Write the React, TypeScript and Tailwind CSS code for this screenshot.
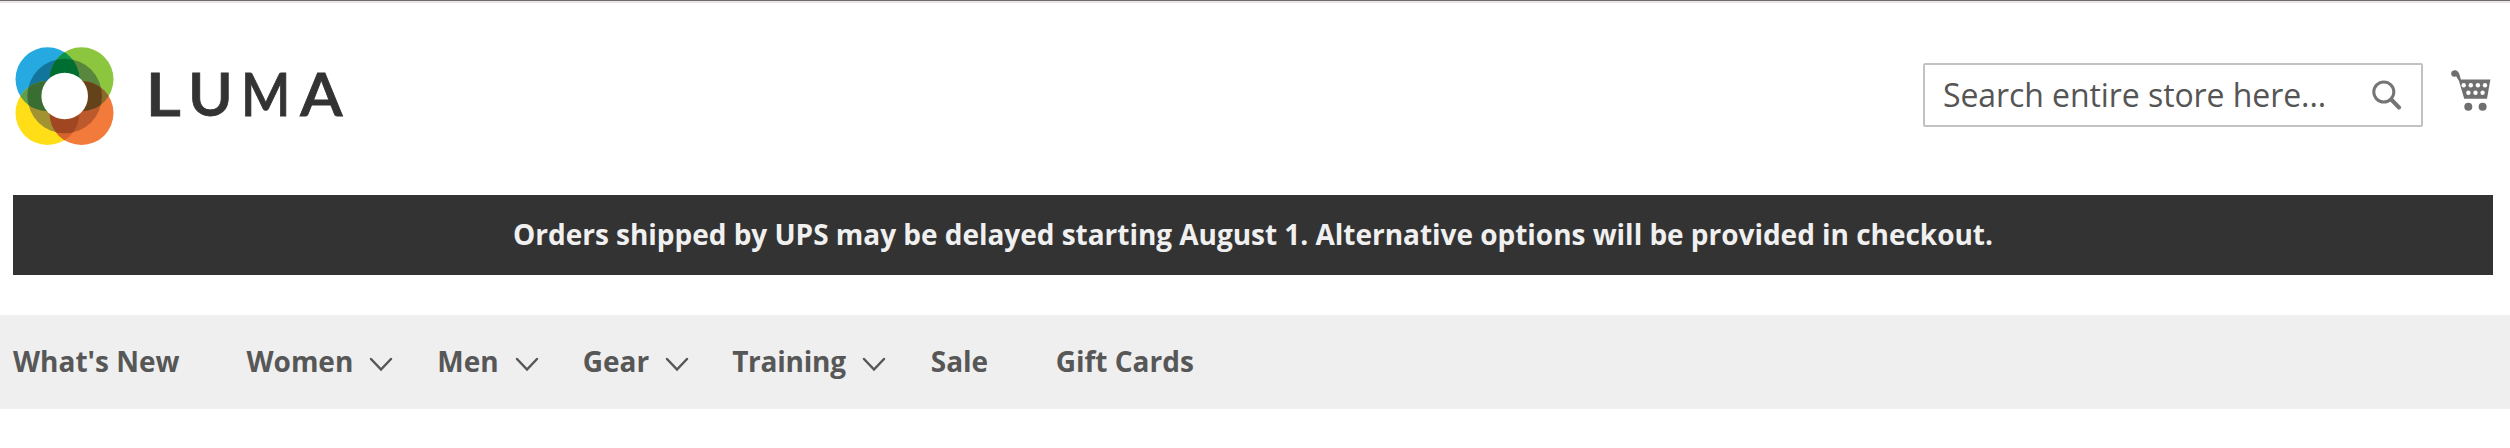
import { clsx } from "clsx";

const links = [
  { label: "What's New", hasMenu: false, space: "mr-[67px]" },
  { label: "Women", hasMenu: true, space: "mr-[44px]" },
  { label: "Men", hasMenu: true, space: "mr-[44px]" },
  { label: "Gear", hasMenu: true, space: "mr-[43px]" },
  { label: "Training", hasMenu: true, space: "mr-[45px] tracking-[-0.25px]" },
  { label: "Sale", hasMenu: false, space: "mr-[67.5px]" },
  { label: "Gift Cards", hasMenu: false, space: "" },
];

const letters = [
  { char: "L", transform: "translate(145.5 116.3) scale(1.157 1)" },
  { char: "U", transform: "translate(187.9 116.3) scale(1.03 1)" },
  { char: "M", transform: "translate(240.9 116.3) scale(0.893 1)" },
  { char: "A", transform: "translate(300 116.3) scale(1.05 1)" },
];

const Logo = () => (
  <svg width="360" height="120" viewBox="0 36 360 120" className="block" aria-label="LUMA">
    <defs>
      <clipPath id="blue"><circle cx="47.5" cy="79.3" r="32" /></clipPath>
      <clipPath id="orange"><circle cx="81.5" cy="113" r="32" /></clipPath>
      <clipPath id="ring"><circle cx="64.7" cy="96" r="37.3" /></clipPath>
    </defs>
    <circle cx="47.5" cy="79.3" r="32" fill="#26a9e0" />
    <circle cx="81.5" cy="79.3" r="32" fill="#8cc63f" />
    <circle cx="47.5" cy="113" r="32" fill="#ffde17" />
    <circle cx="81.5" cy="113" r="32" fill="#f27b3c" />
    <g clipPath="url(#blue)">
      <circle cx="81.5" cy="79.3" r="32" fill="#0b9347" />
      <circle cx="47.5" cy="113" r="32" fill="#5f9e4c" />
    </g>
    <g clipPath="url(#orange)">
      <circle cx="81.5" cy="79.3" r="32" fill="#8a6a2b" />
      <circle cx="47.5" cy="113" r="32" fill="#d8622b" />
    </g>
    <g clipPath="url(#ring)">
      <circle cx="47.5" cy="79.3" r="32" fill="#12769c" />
      <circle cx="81.5" cy="79.3" r="32" fill="#58873d" />
      <circle cx="47.5" cy="113" r="32" fill="#a39232" />
      <circle cx="81.5" cy="113" r="32" fill="#bd5a2d" />
      <g clipPath="url(#blue)">
        <circle cx="81.5" cy="79.3" r="32" fill="#006d31" />
        <circle cx="47.5" cy="113" r="32" fill="#3a6d31" />
      </g>
      <g clipPath="url(#orange)">
        <circle cx="81.5" cy="79.3" r="32" fill="#65431a" />
        <circle cx="47.5" cy="113" r="32" fill="#a04722" />
      </g>
    </g>
    <circle cx="64.7" cy="96" r="23.3" fill="#fff" />
    <g className="font-['Lato',sans-serif] text-[59px] font-semibold" fill="#333" stroke="#333" strokeWidth="0.8">
      {letters.map((letter) => (
        <text key={letter.char} transform={letter.transform}>{letter.char}</text>
      ))}
    </g>
  </svg>
);

const SearchIcon = () => (
  <svg width="30" height="30" viewBox="0 0 30 30" fill="none" stroke="#757575" className="-ml-4">
    <circle cx="11.8" cy="12" r="10" strokeWidth="3" />
    <path d="M19.2 19.5 27 27.5" strokeWidth="4" strokeLinecap="round" />
  </svg>
);

const CartIcon = () => (
  <svg width="40" height="42" viewBox="0 0 40 42" fill="#6f6f6f">
    <circle cx="3.4" cy="3.6" r="3.2" />
    <path d="M3 .4C7 0 8.5 3 9.8 9.6H39.4L36 28.8H13.2L8 11 5 6Z" />
    <circle cx="17.3" cy="36.8" r="4" />
    <circle cx="31.6" cy="36.8" r="4" />
    <g fill="#fff">
      <circle cx="12.7" cy="15.3" r="2.2" />
      <circle cx="19.8" cy="15.3" r="2.2" />
      <circle cx="26.9" cy="15.3" r="2.2" />
      <circle cx="34" cy="15.3" r="2.2" />
      <circle cx="17.4" cy="22.8" r="2.2" />
      <circle cx="24.5" cy="22.8" r="2.2" />
      <circle cx="31.6" cy="22.8" r="2.2" />
    </g>
  </svg>
);

const Chevron = () => (
  <svg width="24" height="16" viewBox="0 0 24 16" fill="none" stroke="#575757" className="ml-4 mt-2">
    <path d="M2 2 12 12.5 22 2" strokeWidth="2.5" strokeLinecap="round" />
  </svg>
);

const App = () => {
  return (
    <div className="h-[448px] overflow-hidden bg-white font-['Open_Sans',sans-serif]">
      <div className="h-[3px] border-t border-[#706b6e] bg-[#e9e5e7]" />
      <header className="flex h-48 items-start justify-between pr-[19px]">
        <div className="pt-[33px]">
          <Logo />
        </div>
        <div className="flex pt-[60px]">
          <div className="flex h-16 w-[500px] items-center justify-between rounded-[2px] border-2 border-[#c2c2c2] pl-[18px] pr-[19px]">
            <span className="whitespace-nowrap text-[32px] leading-none tracking-[-0.08px] text-[#555]">
              Search entire store here...
            </span>
            <SearchIcon />
          </div>
          <div className="ml-7 mt-[7px]">
            <CartIcon />
          </div>
        </div>
      </header>
      <div className="ml-[13px] mr-[17px] flex h-20 items-center justify-center bg-[#333] pb-[2px]">
        <p className="whitespace-nowrap text-[28px] font-bold tracking-[-0.03px] text-[#f0f0f0]">
          Orders shipped by UPS may be delayed starting August 1. Alternative options will be provided in checkout.
        </p>
      </div>
      <nav className="mt-10 flex h-[94px] items-center bg-[#efefef] pb-[2px] pl-[13px] text-[28px] font-bold text-[#575757]">
        {links.map((link) => (
          <a key={link.label} className={clsx("flex items-center whitespace-nowrap", link.space)}>
            {link.label}
            {link.hasMenu && <Chevron />}
          </a>
        ))}
      </nav>
    </div>
  );
};

export default App;
